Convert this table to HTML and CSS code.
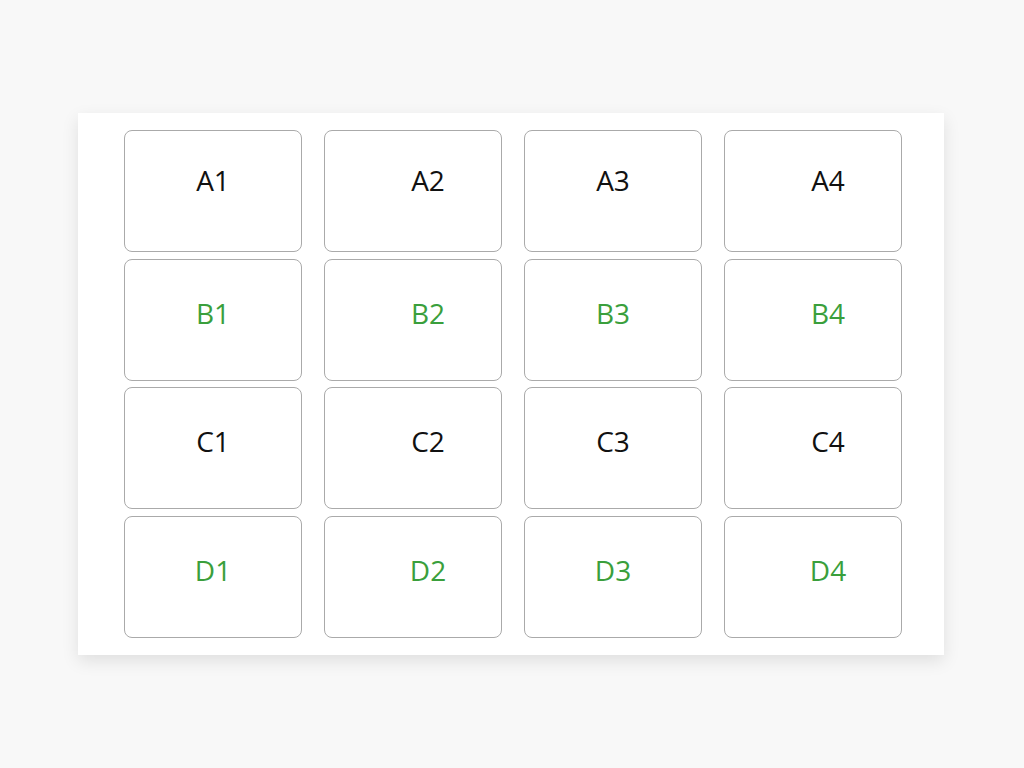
FILE: index.html
```html
<!DOCTYPE html>
<html lang="en">
<head>
  <meta charset="UTF-8" />
  <meta name="viewport" content="width=device-width, initial-scale=1.0"/>
  <title>Seat grid</title>
  <link rel="stylesheet" href="styles.css">
</head>
<body>
  <div class="board">
    <div class="grid">
      <div class="cell">A1</div>
      <div class="cell">A2</div>
      <div class="cell">A3</div>
      <div class="cell">A4</div>
      <div class="cell green">B1</div>
      <div class="cell green">B2</div>
      <div class="cell green">B3</div>
      <div class="cell green">B4</div>
      <div class="cell">C1</div>
      <div class="cell">C2</div>
      <div class="cell">C3</div>
      <div class="cell">C4</div>
      <div class="cell green">D1</div>
      <div class="cell green">D2</div>
      <div class="cell green">D3</div>
      <div class="cell green">D4</div>
    </div>
  </div>
</body>
</html>
```

FILE: styles.css
```css
body {
  font-family: "Open Sans", Arial, sans-serif;
  margin: 0;
  background: #f8f8f8;
  height: 768px;
}

.board {
  position: relative;
  top: 113px;
  margin-left: 78px;
  width: 866px;
  height: 542px;
  box-sizing: border-box;
  background: #fff;
  box-shadow: 0 6px 16px rgba(0,0,0,0.1);
  padding: 17px 42px 18px 46px;
}

.grid {
  display: grid;
  grid-template-columns: repeat(4, 178px);
  grid-template-rows: repeat(4, 122px);
  column-gap: 22px;
  row-gap: 6.6px;
}

.cell {
  border: 1px solid #aaa;
  border-radius: 8px;
  box-sizing: border-box;
  padding-top: 30px;
  text-align: center;
  font-size: 28px;
  line-height: 38px;
  color: #111;
}

.cell:nth-child(n+5) {
  padding-top: 34px;
}

.cell:nth-child(even) {
  padding-left: 30px;
}

.green {
  color: #3a9f3c;
}
```
